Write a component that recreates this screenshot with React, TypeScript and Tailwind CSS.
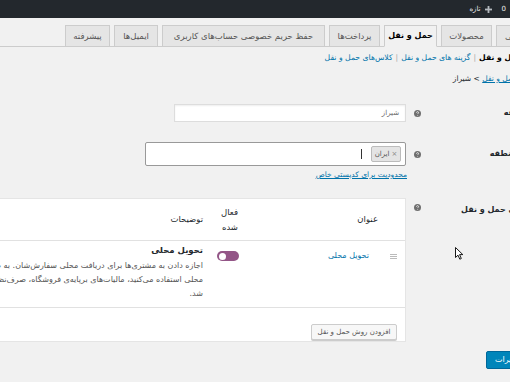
import React from "react";

const Help = () => (
  <svg width="7" height="7" viewBox="0 0 14 14" className="shrink-0">
    <circle cx="7" cy="7" r="7" fill="#6f6f6f" />
    <path d="M5 5.3c0-1.3 1-2 2.1-2 1.2 0 2 .8 2 1.8 0 1.4-1.6 1.5-1.6 2.8" stroke="#fff" strokeWidth="1.6" fill="none" />
    <circle cx="7.5" cy="10.4" r="0.9" fill="#fff" />
  </svg>
);

export default function App() {
  const tabs: { t: string; w: string; active?: boolean }[] = [
    { t: "عمومی", w: "w-[44px]" },
    { t: "محصولات", w: "w-[51px]" },
    { t: "حمل و نقل", w: "w-[53px]", active: true },
    { t: "پرداخت‌ها", w: "w-[51px]" },
    { t: "حفظ حریم خصوصی حساب‌های کاربری", w: "w-[163px]" },
    { t: "ایمیل‌ها", w: "w-[44px]" },
    { t: "پیشرفته", w: "w-[45px]" },
  ];
  return (
    <div className="w-[510px] h-[382px] overflow-hidden bg-[#f1f1f1] relative font-['DejaVu_Sans',sans-serif] text-[#444]">
      <div dir="rtl" className="w-[650px] ml-[-90px]">
        {/* admin bar */}
        <div className="h-[18px] bg-[#23282d] flex items-center pr-[54px] gap-[10px] text-[7px] text-[#eee]">
          <span>0</span>
          <div className="flex items-center gap-[4px]">
            <svg width="7" height="7" viewBox="0 0 7 7">
              <rect x="2.6" y="0" width="1.8" height="7" fill="#b4b9be" />
              <rect x="0" y="2.6" width="7" height="1.8" fill="#b4b9be" />
            </svg>
            <span>تازه</span>
          </div>
        </div>

        {/* tabs */}
        <div className="mt-[7px] flex items-start gap-[4px] pr-[20px] border-b border-[#ccc] h-[22px]">
          {tabs.map((tb) => (
            <div
              key={tb.t}
              className={`${tb.w} h-[22px] shrink-0 flex items-center justify-center border border-[#ccc] whitespace-nowrap ${
                tb.active
                  ? "bg-[#f1f1f1] border-b-[#f1f1f1] text-black font-bold text-[8px]"
                  : "bg-[#e5e5e5] text-[#555] text-[8.5px]"
              }`}
            >
              {tb.t}
            </div>
          ))}
        </div>

        {/* subsubsub */}
        <div className="mt-[5px] h-[12px] leading-[12px] pr-[38px] text-[7.7px] whitespace-nowrap">
          <span className="font-bold text-black">حمل و نقل</span>
          <span className="text-[#aaa] mx-[3px]">|</span>
          <span className="text-[#0073aa]">گزینه های حمل و نقل</span>
          <span className="text-[#aaa] mx-[3px]">|</span>
          <span className="text-[#0073aa]">کلاس‌های حمل و نقل</span>
        </div>

        {/* heading */}
        <div className="mt-[9px] h-[12px] leading-[12px] pr-[20px] text-[7.5px] text-[#23282d] whitespace-nowrap">
          <span className="text-[#0073aa] underline">مناطق حمل و نقل</span> &gt; شیراز
        </div>

        {/* row 1 */}
        <div className="mt-[19px] flex items-center h-[18px]">
          <div className="w-[123px] shrink-0 pr-[15px] text-[8px] font-bold text-[#23282d] whitespace-nowrap">نام منطقه</div>
          <div className="mr-[16px] ml-[8px] flex"><Help /></div>
          <div className="w-[232px] h-[18px] bg-white border border-[#ddd] shadow-[inset_0_1px_2px_rgba(0,0,0,0.07)] flex items-center pr-[6px] text-[7px] text-[#666]">
            شیراز
          </div>
        </div>

        {/* row 2 */}
        <div className="mt-[20px] flex items-center h-[24px]">
          <div className="w-[123px] shrink-0 pr-[15px] text-[8px] font-bold text-[#23282d] whitespace-nowrap">مناطق منطقه</div>
          <div className="mr-[16px] ml-[8px] flex"><Help /></div>
          <div className="w-[261px] h-[24px] bg-white border border-[#999] rounded-[2px] flex items-center pr-[4px] gap-[9px]">
            <div className="h-[16px] w-[30px] bg-[#e4e4e4] border border-[#bbb] rounded-[2px] flex items-center justify-center gap-[2px] text-[7px] text-[#555]">
              <span className="text-[#888]">×</span>
              <span>ایران</span>
            </div>
            <div className="w-[1px] h-[10px] bg-[#333]" />
          </div>
        </div>
        <div className="mt-[3px] h-[12px] leading-[12px] flex">
          <div className="w-[153px] shrink-0" />
          <span className="text-[7.5px] text-[#0073aa] underline whitespace-nowrap">محدودیت برای کدپستی خاص</span>
        </div>

        {/* row 3 */}
        <div className="mt-[17px] flex items-start">
          <div className="w-[123px] shrink-0 pr-[15px] pt-[6px] text-[8px] font-bold text-[#23282d] whitespace-nowrap">روش‌های حمل و نقل</div>
          <div className="mr-[16px] ml-[8px] flex pt-[6px]"><Help /></div>
          <div className="w-[487px] h-[144px] bg-white border border-[#e5e5e5] flex flex-col">
            {/* header */}
            <div className="h-[42px] border-b border-[#e1e1e1] flex items-center text-[8.5px] text-[#23282d]">
              <div className="w-[161px] shrink-0 pr-[27px]">عنوان</div>
              <div className="w-[35px] shrink-0 pr-[6px] leading-[15px]">
                فعال
                <br />
                شده
              </div>
              <div className="pr-[6px]">توضیحات</div>
            </div>
            {/* body row */}
            <div className="h-[67px] border-b border-[#e1e1e1] flex items-start">
              <div className="w-[24px] shrink-0 pt-[13px] flex justify-center">
                <svg width="7" height="5" viewBox="0 0 7 5">
                  <rect y="0" width="7" height="1" fill="#bbb" />
                  <rect y="2" width="7" height="1" fill="#bbb" />
                  <rect y="4" width="7" height="1" fill="#bbb" />
                </svg>
              </div>
              <div className="w-[137px] shrink-0 pr-[12px] pt-[9px] leading-[12px] text-[8px] text-[#0073aa]">تحویل محلی</div>
              <div className="w-[35px] shrink-0 pr-[5px] pt-[10px]">
                <div className="w-[22px] h-[10px] rounded-full bg-[#935687] flex items-center justify-end pl-[2px]">
                  <div className="w-[7px] h-[7px] rounded-full bg-white" />
                </div>
              </div>
              <div className="pr-[6px] pt-[3px] whitespace-nowrap">
                <div className="text-[8.5px] font-bold leading-[12px] text-[#23282d]">تحویل محلی</div>
                <div className="mt-[3px] text-[8px] leading-[14px] text-[#555]">
                  <div>اجازه دادن به مشتری‌ها برای دریافت محلی سفارش‌شان. به صورت پیش‌فرض، هنگامی که از تحویل</div>
                  <div>محلی استفاده می‌کنید، مالیات‌های برپایه‌ی فروشگاه، صرف‌نظر از آدرس مشتری اعمال خواهد</div>
                  <div>شد.</div>
                </div>
              </div>
            </div>
            {/* footer */}
            <div className="flex-1 pr-[8px] pt-[9px]">
              <div className="inline-flex h-[16px] w-[86px] items-center justify-center bg-[#f7f7f7] border border-[#ccc] rounded-[2px] shadow-[0_1px_0_#ccc] text-[7px] text-[#555] whitespace-nowrap">
                افزودن روش حمل و نقل
              </div>
            </div>
          </div>
        </div>

        {/* save */}
        <div className="mt-[9px] pr-[9px] flex">
          <div className="h-[18px] w-[65px] justify-center bg-[#0085ba] border border-[#006799] rounded-[2px] flex items-center text-[8px] text-white whitespace-nowrap">
            ذخیره تغییرات
          </div>
        </div>
      </div>

      {/* mouse cursor */}
      <svg className="absolute left-[455px] top-[247px]" width="9" height="13" viewBox="0 0 9 13">
        <path d="M0.5 0.5 L0.5 10.5 L3 8.2 L4.8 12.2 L6.3 11.5 L4.6 7.6 L7.8 7.6 Z" fill="#fff" stroke="#000" strokeWidth="0.9" strokeLinejoin="round" />
      </svg>
    </div>
  );
}
